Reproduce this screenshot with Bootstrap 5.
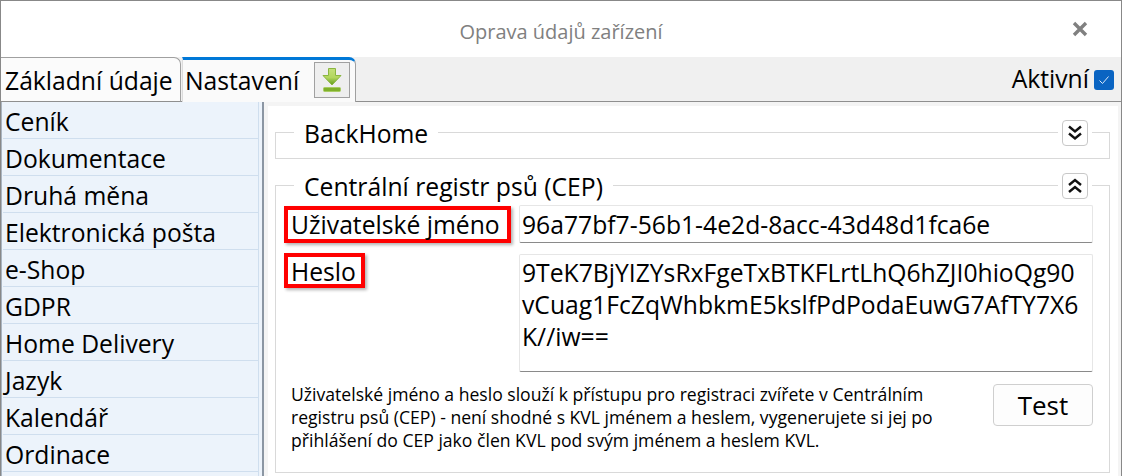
<!DOCTYPE html>
<html lang="cs">
<head>
<meta charset="utf-8">
<title>Oprava údajů zařízení</title>
<link rel="stylesheet" href="https://cdn.jsdelivr.net/npm/bootstrap@5.3.0/dist/css/bootstrap.min.css">
<style>
html,body{height:476px;overflow:hidden}
body{font-family:"Open Sans","Noto Sans",sans-serif;color:#000;background:#fff;font-size:24.7px}
.shell{width:1122px;height:476px;border-top:1px solid #888;border-left:1px solid #888;border-right:1px solid #888;overflow:hidden}
.titlebar{height:56px}
.titletext{font-size:20px;color:#808080;margin-top:5px}
.closer{right:33px;top:20px}
.tabrow{height:45px;background:#f0f0f0;border-bottom:1px solid #8f8f8f}
.tabx{height:45px;border:1px solid #a0a0a0;border-bottom:0;border-top-right-radius:7px;background:#fafafa;line-height:46px;padding:0 4px;margin-bottom:-1px}
.tabx-a{width:180px;border-left:0;background:#fbfbfb;border-bottom:1px solid #8f8f8f}
.tabx-b{width:174px;margin-left:1px;background:#fafafa;border-top:3px solid #0078d7;border-color:#0078d7 #a0a0a0 #a0a0a0 #dcdcdc;line-height:42px;padding-left:2px;gap:15px}
.dlbox{width:36px;height:36px;border:1px solid #a0a0a0;background:#eeeeee;margin-top:2px}
.activebox{gap:5px;padding-right:7px;height:100%}
.tick{width:20px;height:20px;background:#0a64c2;border-radius:3px;margin-top:2px}
.mainrow{height:374px;background:#f4f4f4}
.sidelist{width:263px;background:#ecf3fb;border-right:2px solid #8b96a3;border-left:1px solid #a9b4c0;box-shadow:inset -3px 0 0 #ecf3fb,inset -4px 0 0 #cfdeee;padding-left:1px;padding-right:3px}
.sideitem{height:37px;line-height:39px;border-bottom:1px solid #cfdeee;padding-left:2px}
.contentpane{width:850px;padding:26px 0 0 7px;background:#fff;margin:4px 0 0 4px}
.fsbox{border:1px solid #d9d9d9;width:835px}
.fs-one{height:27px;margin-bottom:26px}
.fs-two{height:288px}
.fshead{margin-top:-13px;height:26px;padding-left:18px;padding-right:21px}
.fslegend{background:#fff;padding:0 10px;line-height:28px;height:26px}
.fstoggle{width:26px;height:26px;border:1px solid #c8c8c8;border-radius:4px;background:#fff;box-shadow:0 0 0 4px #fff}
.formline{padding-left:8px;padding-right:16px}
.redlabel{border:4px solid #f00;box-shadow:2px 2px 3px rgba(0,0,0,.3);background:#fff;padding:0 3px;line-height:29px}
.rl-user{width:227px;height:37px;margin-top:7px}
.rl-pass{width:81px;height:35px;margin-top:-1px}
.fieldone{width:574px;height:38px;border:1px solid #e6e6e6;border-bottom:1px solid #8a8a8a;border-radius:2px;padding:0 2px;line-height:37px;margin-top:6px}
.fieldtwo{width:574px;height:118px;border:1px solid #e6e6e6;border-bottom:1px solid #8a8a8a;border-radius:2px;padding:2px 0 0 2px;line-height:32px}
.row-user{margin-bottom:11px}
.bottomline{padding-left:15px;padding-right:16px;margin-top:12px}
.helptext{width:680px;font-size:17.6px;line-height:23px;margin-top:-1px}
.testbtn{width:100px;height:42px;border:1px solid #cfcfcf;border-radius:4px;background:#fdfdfd;font-size:26px;line-height:38px;text-align:center;color:#000;padding:0}
</style>
</head>
<body>
<div class="shell d-flex flex-column">
  <div class="titlebar position-relative d-flex justify-content-center align-items-center">
    <span class="titletext">Oprava údajů zařízení</span>
    <svg class="closer position-absolute" width="16" height="16" viewBox="0 0 16 16"><path d="M2 2L14 14M14 2L2 14" stroke="#808080" stroke-width="3.4" fill="none"/></svg>
  </div>
  <div class="tabrow d-flex justify-content-between">
    <div class="d-flex">
      <div class="tabx tabx-a text-nowrap">Základní údaje</div>
      <div class="tabx tabx-b d-flex text-nowrap">
        <span>Nastavení</span>
        <span class="dlbox d-flex align-items-center justify-content-center">
          <svg width="20" height="25" viewBox="0 0 20 25"><defs><linearGradient id="gg" x1="0" y1="0" x2="0" y2="1"><stop offset="0" stop-color="#c4e07a"/><stop offset=".55" stop-color="#b2d65e"/><stop offset="1" stop-color="#5e9a18"/></linearGradient></defs><path d="M6.500 .5H13.500V7.500H19L10 17L1 7.500H6.500Z" fill="url(#gg)" stroke="#8ab640" stroke-width="1"/><rect x="1.500" y="19.500" width="17" height="4" rx="1" fill="#7fb02a" stroke="#a8cc62" stroke-width="1"/></svg>
        </span>
      </div>
    </div>
    <div class="activebox d-flex align-items-center">
      <span>Aktivní</span>
      <span class="tick d-flex align-items-center justify-content-center"><svg width="12" height="12" viewBox="0 0 12 12"><path d="M1.500 6.500L4.500 9.500L10.500 2.500" stroke="#d8e8fa" stroke-width="1" fill="none"/></svg></span>
    </div>
  </div>
  <div class="mainrow d-flex">
    <div class="sidelist flex-shrink-0">
      <div class="sideitem">Ceník</div>
      <div class="sideitem">Dokumentace</div>
      <div class="sideitem">Druhá měna</div>
      <div class="sideitem">Elektronická pošta</div>
      <div class="sideitem">e-Shop</div>
      <div class="sideitem">GDPR</div>
      <div class="sideitem">Home Delivery</div>
      <div class="sideitem">Jazyk</div>
      <div class="sideitem">Kalendář</div>
      <div class="sideitem">Ordinace</div>
    </div>
    <div class="contentpane flex-shrink-0">
      <div class="fsbox fs-one">
        <div class="fshead d-flex justify-content-between">
          <span class="fslegend">BackHome</span>
          <span class="fstoggle d-flex align-items-center justify-content-center"><svg width="16" height="16" viewBox="0 0 16 16"><path d="M2 1.500L8 6.500L14 1.500M2 8.500L8 13.500L14 8.500" stroke="#111" stroke-width="2.400" fill="none"/></svg></span>
        </div>
      </div>
      <div class="fsbox fs-two">
        <div class="fshead d-flex justify-content-between">
          <span class="fslegend">Centrální registr psů (CEP)</span>
          <span class="fstoggle d-flex align-items-center justify-content-center"><svg width="16" height="16" viewBox="0 0 16 16"><path d="M2 7L8 2L14 7M2 14L8 9L14 14" stroke="#111" stroke-width="2.400" fill="none"/></svg></span>
        </div>
        <div class="formline d-flex justify-content-between row-user">
          <div class="redlabel rl-user text-nowrap">Uživatelské jméno</div>
          <div class="fieldone">96a77bf7-56b1-4e2d-8acc-43d48d1fca6e</div>
        </div>
        <div class="formline d-flex justify-content-between">
          <div class="redlabel rl-pass">Heslo</div>
          <div class="fieldtwo text-nowrap">9TeK7BjYIZYsRxFgeTxBTKFLrtLhQ6hZJI0hioQg90<br>vCuag1FcZqWhbkmE5kslfPdPodaEuwG7AfTY7X6<br>K//iw==</div>
        </div>
        <div class="bottomline d-flex justify-content-between">
          <div class="helptext text-nowrap">Uživatelské jméno a heslo slouží k přístupu pro registraci zvířete v Centrálním<br>registru psů (CEP) - není shodné s KVL jménem a heslem, vygenerujete si jej po<br>přihlášení do CEP jako člen KVL pod svým jménem a heslem KVL.</div>
          <button type="button" class="testbtn">Test</button>
        </div>
      </div>
    </div>
  </div>
</div>
<script src="https://cdn.jsdelivr.net/npm/bootstrap@5.3.0/dist/js/bootstrap.bundle.min.js"></script>
</body>
</html>
